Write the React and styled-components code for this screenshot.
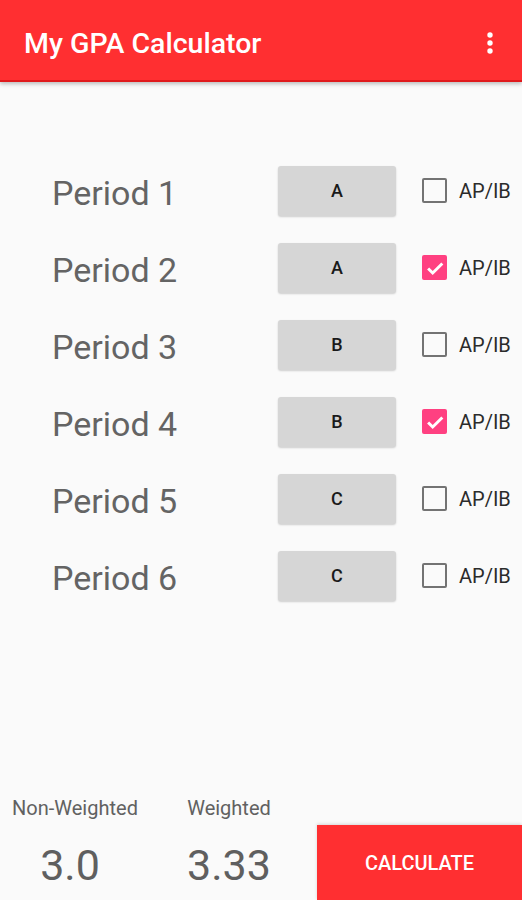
import React, { useState } from 'react';
import styled, { createGlobalStyle } from 'styled-components';

const GlobalStyle = createGlobalStyle`
  body {
    margin: 0;
    background: #fafafa;
    font-family: Roboto, 'Noto Sans', sans-serif;
  }
`;

const Screen = styled.div`
  display: flex;
  flex-direction: column;
  min-height: 100vh;
  background: #fafafa;
`;

const AppBar = styled.header`
  height: 82px;
  box-sizing: border-box;
  background: #ff2f31;
  border-bottom: 2px solid #e0191c;
  box-shadow: 0 2px 4px rgba(0, 0, 0, 0.25);
  display: flex;
  align-items: center;
  justify-content: space-between;
  padding: 6px 28px 0 24px;
`;

const Title = styled.h1`
  margin: 0;
  color: #fff;
  font-size: 28.5px;
  font-weight: 500;
`;

const MenuButton = styled.button`
  border: 0;
  background: none;
  padding: 0;
  display: flex;
  color: #fff;
`;

const List = styled.main`
  flex: 1;
  padding-top: 70px;
  display: flex;
  flex-direction: column;
`;

const Row = styled.div`
  height: 77px;
  display: flex;
  align-items: center;
`;

const PeriodLabel = styled.div`
  width: 278px;
  padding-left: 52px;
  box-sizing: border-box;
  font-size: 34px;
  color: #646464;
  margin-top: 4px;
`;

const GradeButton = styled.button`
  width: 118px;
  height: 50px;
  border: 0;
  border-radius: 3px;
  background: #d6d6d6;
  box-shadow: 0 1px 2px rgba(0, 0, 0, 0.18);
  font-family: Roboto, sans-serif;
  font-size: 18px;
  font-weight: 500;
  color: #1a1a1a;
`;

const Check = styled.label`
  display: flex;
  align-items: center;
  margin-left: 26px;
  gap: 12px;
  font-size: 20px;
  color: #2b2b2b;
`;

const Box = styled.span`
  width: 25px;
  height: 25px;
  box-sizing: border-box;
  border-radius: 2px;
  border: ${p => (p.$on ? '0' : '2px solid #737373')};
  background: ${p => (p.$on ? '#ff4081' : 'transparent')};
  display: flex;
  align-items: center;
  justify-content: center;
`;

const Footer = styled.footer`
  display: grid;
  grid-template-columns: 150px 158px 1fr;
  align-items: end;
`;

const Stat = styled.div`
  display: flex;
  flex-direction: column;
  align-items: center;
  padding-bottom: 10px;
`;

const StatLabel = styled.div`
  font-size: 20px;
  color: #616161;
`;

const StatValue = styled.div`
  font-size: 43px;
  color: #5f5f5f;
  margin-top: 20px;
  margin-right: ${p => p.$shift || 0}px;
  line-height: 50px;
`;

const CalcButton = styled.button`
  height: 75px;
  margin-left: 9px;
  border: 0;
  background: #ff2f31;
  color: #fff;
  font-family: Roboto, sans-serif;
  font-size: 20px;
  font-weight: 500;
  box-shadow: 0 -1px 3px rgba(0, 0, 0, 0.15);
`;

const rows = [
  { grade: 'A', ap: false },
  { grade: 'A', ap: true },
  { grade: 'B', ap: false },
  { grade: 'B', ap: true },
  { grade: 'C', ap: false },
  { grade: 'C', ap: false },
];

export default function App() {
  const [data] = useState(rows);
  return (
    <Screen>
      <GlobalStyle />
      <AppBar>
        <Title>My GPA Calculator</Title>
        <MenuButton aria-label="More">
          <svg width="8" height="24" viewBox="0 0 8 24">
            <circle cx="4" cy="4" r="2.7" fill="#fff" />
            <circle cx="4" cy="12" r="2.7" fill="#fff" />
            <circle cx="4" cy="20" r="2.7" fill="#fff" />
          </svg>
        </MenuButton>
      </AppBar>
      <List>
        {data.map((r, i) => (
          <Row key={i}>
            <PeriodLabel>Period {i + 1}</PeriodLabel>
            <GradeButton>{r.grade}</GradeButton>
            <Check>
              <Box $on={r.ap}>
                {r.ap && (
                  <svg width="22" height="22" viewBox="0 0 24 24">
                    <path d="M4.5 12.5l5 5L20 7" fill="none" stroke="#fff" strokeWidth="3.2" />
                  </svg>
                )}
              </Box>
              AP/IB
            </Check>
          </Row>
        ))}
      </List>
      <Footer>
        <Stat>
          <StatLabel>Non-Weighted</StatLabel>
          <StatValue $shift={10}>3.0</StatValue>
        </Stat>
        <Stat>
          <StatLabel>Weighted</StatLabel>
          <StatValue>3.33</StatValue>
        </Stat>
        <CalcButton>CALCULATE</CalcButton>
      </Footer>
    </Screen>
  );
}
